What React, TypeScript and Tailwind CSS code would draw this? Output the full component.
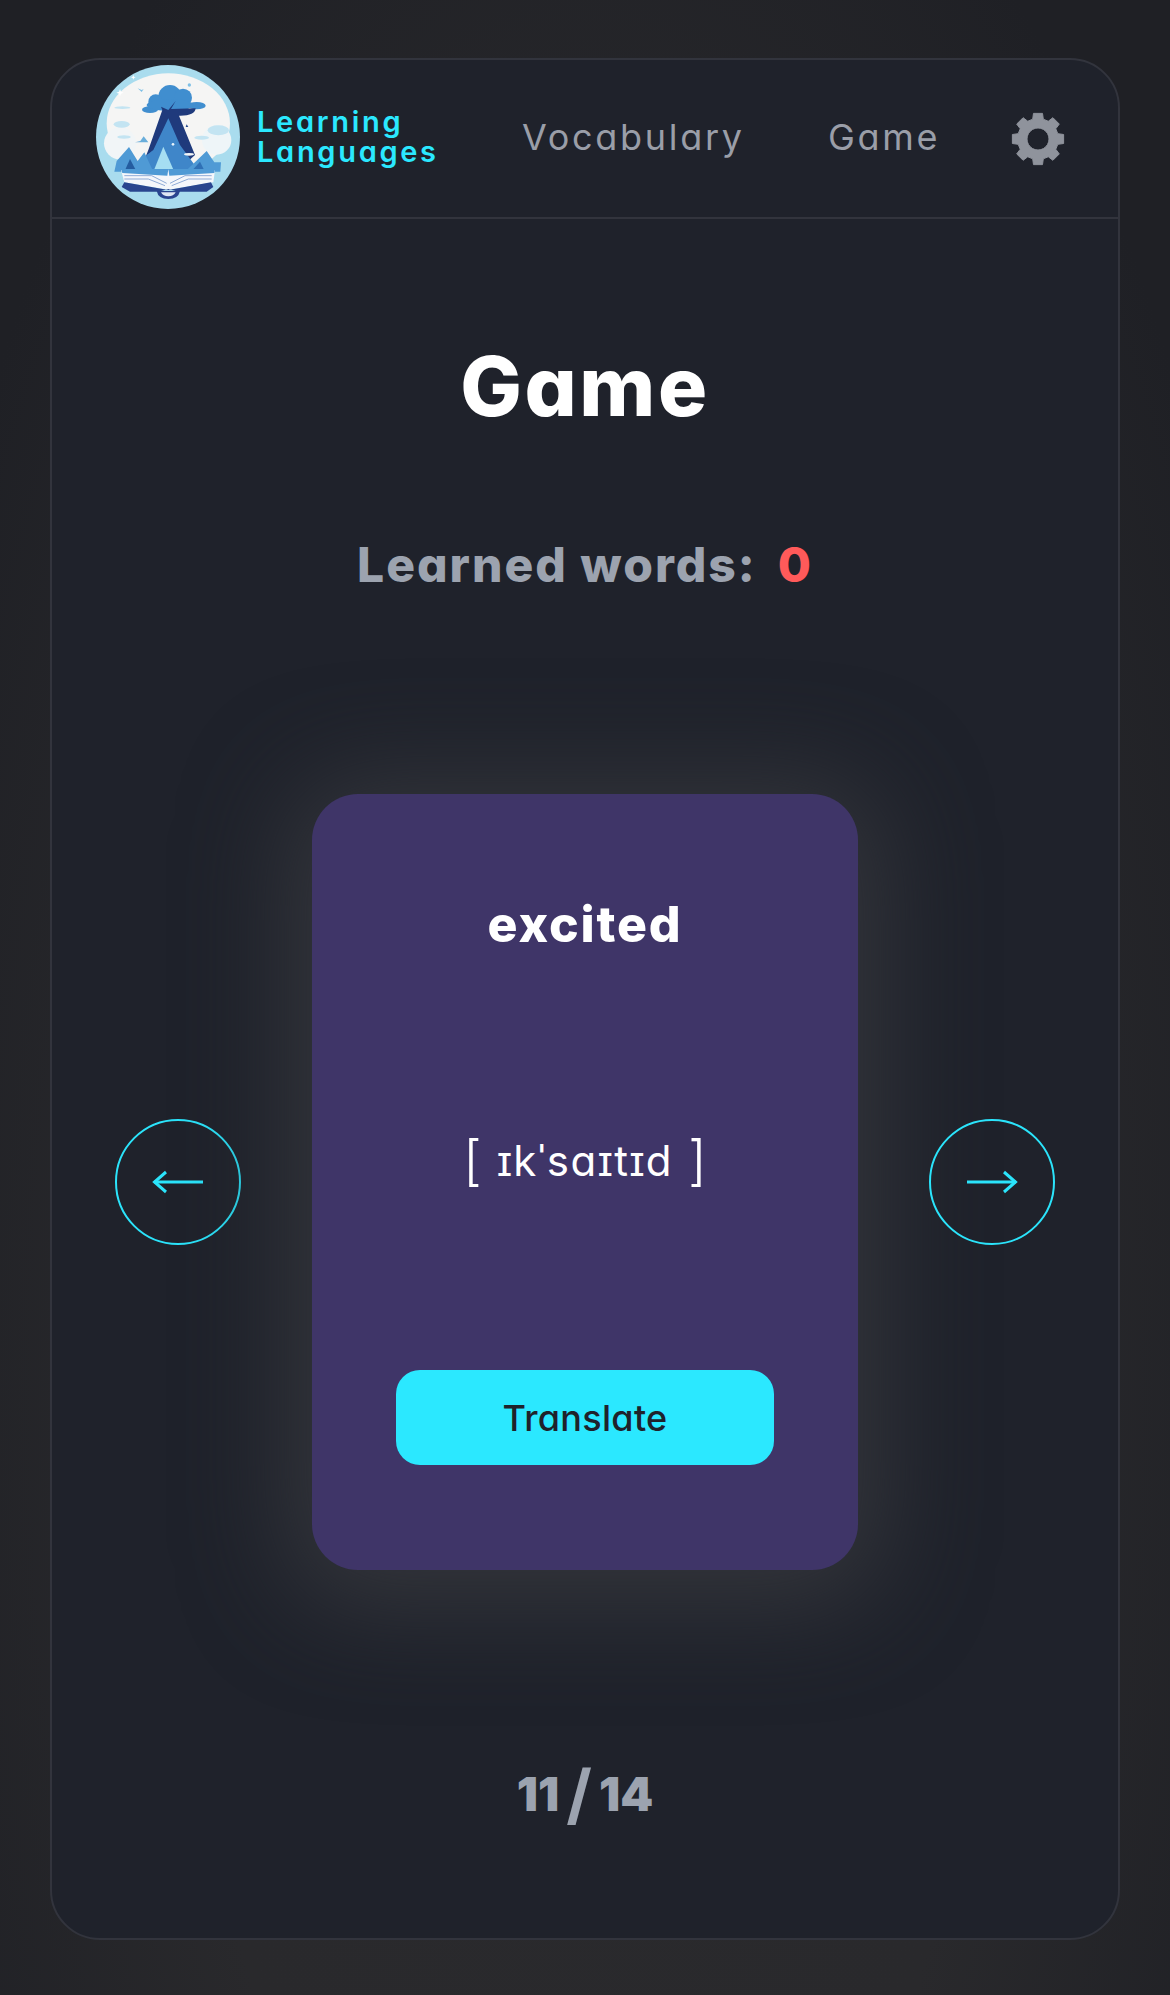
// Eight-tooth cog, hole cut with evenodd
function gearPath() {
  const c = 27;
  const pts: string[] = [];
  for (let i = 0; i < 8; i++) {
    const a = (i * Math.PI) / 4;
    const step = (deg: number, r: number) => {
      const t = a + (deg * Math.PI) / 180;
      return `${(c + r * Math.sin(t)).toFixed(2)} ${(c - r * Math.cos(t)).toFixed(2)}`;
    };
    pts.push(step(-15, 20.5), step(-10, 26), step(10, 26), step(15, 20.5));
  }
  return `M${pts.join('L')}Z M27 16a11 11 0 1 0 0.010 0Z`;
}

function Logo() {
  return (
    <svg viewBox="33 30 432 432" className="w-[144px] h-[144px] shrink-0">
      <circle cx="249" cy="246" r="216" fill="#a9dcee" />
      {/* sky */}
      <ellipse cx="250" cy="205" rx="185" ry="150" fill="#f5f5f4" />
      <circle cx="105" cy="265" r="48" fill="#f1f5f7" />
      <circle cx="395" cy="255" r="44" fill="#eef5f8" />
      <g fill="#c3e4f2">
        <ellipse cx="110" cy="208" rx="24" ry="10" />
        <ellipse cx="117" cy="246" rx="20" ry="5" />
        <ellipse cx="400" cy="226" rx="32" ry="15" />
        <ellipse cx="350" cy="248" rx="22" ry="6" />
        <ellipse cx="112" cy="158" rx="24" ry="4" />
      </g>
      {/* cloud */}
      <g fill="#408ecf">
        <circle cx="255" cy="125" r="35" />
        <circle cx="212" cy="140" r="22" />
        <circle cx="294" cy="128" r="27" />
        <ellipse cx="195" cy="164" rx="24" ry="10" />
        <ellipse cx="335" cy="152" rx="27" ry="11" />
        <ellipse cx="255" cy="150" rx="70" ry="18" />
      </g>
      <path d="M150 262l16-4 10-14 14 18z" fill="#6aaedb" />
      {/* dark peak */}
      <path d="M272 138L258 162 332 160Q330 183 282 182L330 300 280 345 170 335 190 285 232 165 228 155 250 165z" fill="#1f3a7c" />
      {/* ridge */}
      <path d="M250 190L285 270 340 345 190 345 172 310 205 285z" fill="#3f86c9" />
      <path d="M235 275L268 350H205z" fill="#a5def2" />
      {/* side mountains */}
      <path d="M88 350L95 318 132 276 158 318 178 292 205 350z" fill="#4f9ad5" />
      <path d="M300 350L365 288 388 322 408 322 406 350z" fill="#4f9ad5" />
      <path d="M118 350L135 312 155 350z" fill="#245c9f" />
      <path d="M318 350L345 320 360 350z" fill="#2f70b5" />
      <circle cx="264" cy="268" r="4" fill="#e8f4fb" />
      <ellipse cx="312" cy="298" rx="15" ry="4" fill="#f1f5f7" />
      {/* book */}
      <path d="M108 345H390L385 382 250 404 118 382z" fill="#f5f7fb" />
      <path d="M108 342H250L247 362 112 354zM390 342H250L253 362 388 354z" fill="#4f9ad5" />
      <g stroke="#7a9bcf" strokeWidth="2.500" fill="none">
        <path d="M118 362H200L245 385" />
        <path d="M380 362H300L255 385" />
        <path d="M118 372H190L240 392" />
        <path d="M380 372H310L260 392" />
      </g>
      <path d="M118 382L110 396 135 410H220L250 402 280 410H365L385 396 378 382 250 405z" fill="#29458f" />
      <path d="M215 408H285Q280 432 250 432T215 408z" fill="#29458f" />
      <path d="M228 412H272Q266 424 250 424T228 412z" fill="#dfe7f3" />
      <g fill="#ffffff">
        <path d="M105 102l3 8 8 3-8 3-3 8-3-8-8-3 8-3z" />
        <path d="M145 60l2 5 5 2-5 2-2 5-2-5-5-2 5-2z" />
      </g>
      <path d="M305 208l5 8-8 0z" fill="#274a8e" />
      <circle cx="313" cy="90" r="5" fill="#7fc0e6" />
      <path d="M158 100l12 5 6-3-6 9z" fill="#7fc0e6" />
    </svg>
  );
}

function ArrowButton({ dir }: { dir: 'left' | 'right' }) {
  return (
    <button className="w-[126px] h-[126px] rounded-full border-2 border-[#2be4fb] flex items-center justify-center shrink-0">
      <svg viewBox="0 0 52 24" className="w-[52px] h-[24px]" fill="none" stroke="#2be4fb">
        {dir === 'left' ? (
          <>
            <path d="M2 12H51" strokeWidth="3" />
            <path d="M14 2L2.500 12L14 22" strokeWidth="3" />
          </>
        ) : (
          <>
            <path d="M1 12H50" strokeWidth="3" />
            <path d="M38 2L49.500 12L38 22" strokeWidth="3" />
          </>
        )}
      </svg>
    </button>
  );
}

export default function App() {
  return (
    <div className="min-h-[1995px] pt-[58px] px-[50px] font-['Inter',sans-serif] [font-feature-settings:'cv11'] bg-[radial-gradient(ellipse_at_50%_70%,#2a2a2d_0%,#29292c_50%,#1f2025_88%,#1f2025_100%)]">
      <div className="h-[1882px] flex flex-col rounded-[50px] border-2 border-[#32343d] bg-[#1f222b]">
        {/* Header */}
        <header className="h-[159px] shrink-0 flex items-center pl-[44px] pb-[3px] border-b-2 border-[#32343d]">
          <Logo />
          <div className="ml-[17px] w-[182px] text-[29px] leading-[30px] font-semibold tracking-[2.7px] text-[#2be8ff]">
            <div>Learning</div>
            <div>Languages</div>
          </div>
          <nav className="ml-[83px] flex items-center text-[#9a9ea8] text-[36px] font-normal tracking-[2.7px]">
            <a className="w-[306px]">Vocabulary</a>
            <a className="w-[183px]">Game</a>
          </nav>
          <svg viewBox="0 0 54 54" className="w-[54px] h-[54px] shrink-0 translate-y-[2px]">
            <path d={gearPath()} fill="#8f939c" fillRule="evenodd" stroke="#8f939c" strokeWidth="1" strokeLinejoin="round" />
          </svg>
        </header>

        <h1 className="mt-[130px] text-center text-[82px] leading-[76px] font-extrabold tracking-[2.5px] text-white">Game</h1>

        <div className="mt-[113px] flex justify-center items-baseline text-[48px] leading-[54px] font-extrabold tracking-[2px]">
          <span className="text-[#9ca3af]">Learned words:</span>
          <span className="ml-[21px] text-[#ff5a5a]">0</span>
        </div>

        {/* Flash card row */}
        <div className="mt-[202px] flex items-center justify-between px-[63px]">
          <ArrowButton dir="left" />
          <div className="w-[546px] h-[776px] rounded-[46px] bg-[#3f3568] shadow-[0_10px_100px_26px_#33353b] flex flex-col items-center">
            <div className="mt-[100px] text-[50px] leading-[60px] font-extrabold tracking-[1.8px] text-white">excited</div>
            <div className="mt-[176px] h-[60px] flex items-center text-white">
              <span className="text-[54px] font-light">[</span>
              <span className="mx-[15px] text-[42px] font-normal tracking-[1.5px]">ɪkˈsaɪtɪd</span>
              <span className="text-[54px] font-light">]</span>
            </div>
            <button className="mt-[180px] w-[378px] h-[95px] rounded-[24px] bg-[#2be8ff] text-[36px] font-medium tracking-[0.3px] text-[#1f222b]">
              Translate
            </button>
          </div>
          <ArrowButton dir="right" />
        </div>

        <div className="mt-[194px] flex justify-center items-center text-[#9ca3af] font-black text-[47px] leading-[60px]">
          <span>11</span>
          <span className="mx-[7px] text-[66px] font-bold">/</span>
          <span>14</span>
        </div>
      </div>
    </div>
  );
}
